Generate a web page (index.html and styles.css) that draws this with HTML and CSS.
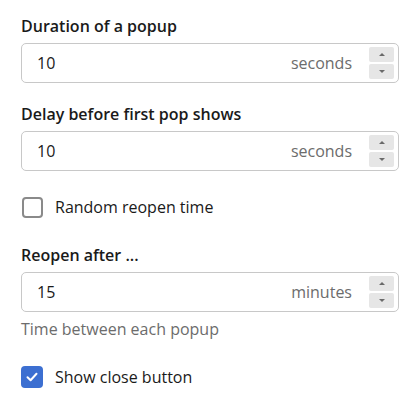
FILE: index.html
```html
<!DOCTYPE html>
<html>
<head>
<meta charset="utf-8">
<link rel="stylesheet" href="styles.css">
</head>
<body>
<div class="form">
  <div class="field">
    <label class="label">Duration of a popup</label>
    <div class="input">
      <span class="value">10</span>
      <span class="unit">seconds</span>
      <span class="spin"><span class="btn"><span class="up"></span></span><span class="btn"><span class="down"></span></span></span>
    </div>
  </div>
  <div class="field field-before-check">
    <label class="label">Delay before first pop shows</label>
    <div class="input">
      <span class="value">10</span>
      <span class="unit">seconds</span>
      <span class="spin"><span class="btn"><span class="up"></span></span><span class="btn"><span class="down"></span></span></span>
    </div>
  </div>
  <div class="check-row">
    <span class="box"></span>
    <span class="check-label">Random reopen time</span>
  </div>
  <div class="field field-last">
    <label class="label">Reopen after ...</label>
    <div class="input">
      <span class="value">15</span>
      <span class="unit">minutes</span>
      <span class="spin"><span class="btn"><span class="up"></span></span><span class="btn"><span class="down"></span></span></span>
    </div>
    <div class="help">Time between each popup</div>
  </div>
  <div class="check-row">
    <span class="box checked"><svg width="12" height="10" viewBox="0 0 12 10"><path d="M1.5 5.2 L4.6 8.2 L10.5 1.8" fill="none" stroke="#fff" stroke-width="2" stroke-linecap="round" stroke-linejoin="round"/></svg></span>
    <span class="check-label">Show close button</span>
  </div>
</div>
</body>
</html>
```
FILE: styles.css
```css
html, body {
  margin: 0;
  padding: 0;
  background: #fff;
}
body {
  font-family: "Open Sans", "Noto Sans", sans-serif;
  color: #1a1a1a;
}
.form {
  padding: 14px 21px 0 21px;
  width: 378px;
}
.field {
  margin-bottom: 19px;
}
.field-before-check {
  margin-bottom: 24px;
}
.field-last {
  margin-bottom: 26px;
}
.label {
  display: block;
  font-size: 16px;
  font-weight: 600;
  line-height: 24px;
  margin-bottom: 5px;
  color: #1a1a1a;
}
.input {
  box-sizing: border-box;
  height: 40px;
  border: 1px solid #c8c8c8;
  border-radius: 5px;
  display: flex;
  align-items: center;
  padding: 0 4px 0 15px;
  font-size: 16px;
}
.value {
  flex: 1;
  color: #1a1a1a;
}
.unit {
  color: #6c6c6c;
  margin-right: 17px;
}
.spin {
  display: flex;
  flex-direction: column;
  gap: 2px;
}
.btn {
  width: 25px;
  height: 15px;
  background: #e6e6e6;
  border-radius: 2px;
  display: flex;
  align-items: center;
  justify-content: center;
}
.up {
  width: 0;
  height: 0;
  border-left: 3px solid transparent;
  border-right: 3px solid transparent;
  border-bottom: 3px solid #6a6a6a;
}
.down {
  width: 0;
  height: 0;
  border-left: 3px solid transparent;
  border-right: 3px solid transparent;
  border-top: 3px solid #6a6a6a;
}
.check-row {
  display: flex;
  align-items: center;
  height: 24px;
  margin-bottom: 24px;
}
.box {
  box-sizing: border-box;
  width: 21px;
  height: 21px;
  border: 2px solid #8a8a8a;
  border-radius: 4px;
  margin-left: 1px;
  margin-right: 12px;
  display: flex;
  align-items: center;
  justify-content: center;
}
.box.checked {
  width: 22px;
  height: 22px;
  margin-left: 0;
  border: none;
  background: #3c6fd1;
}
.check-label {
  font-size: 16px;
  color: #1a1a1a;
}
.help {
  margin-top: 7px;
  font-size: 16px;
  line-height: 20px;
  color: #6c6c6c;
}
```
